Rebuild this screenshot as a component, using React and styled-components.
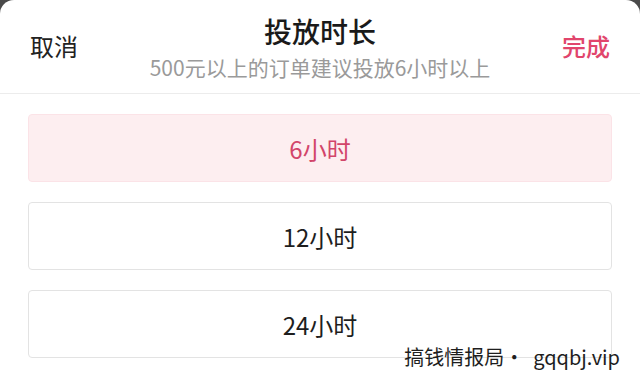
import React, { useState } from "react";
import styled, { createGlobalStyle } from "styled-components";

const GlobalStyle = createGlobalStyle`
    html, body {
        margin: 0;
        padding: 0;
        background: #4a4a4a;
    }
    body {
        font-family: "Noto Sans CJK SC", "Noto Sans", sans-serif;
    }
`;

const options = ["6小时", "12小时", "24小时"];

const App = () => {
    const [selected, setSelected] = useState(0);

    return (
        <>
            <GlobalStyle />
            <Sheet>
                <Header>
                    <Cancel>取消</Cancel>
                    <TitleBind>
                        <Title>投放时长</Title>
                        <Tip>500元以上的订单建议投放6小时以上</Tip>
                    </TitleBind>
                    <Done>完成</Done>
                </Header>
                <List>
                    {options.map((item, i) => (
                        <Option key={item} active={i === selected} onClick={() => setSelected(i)}>
                            {item}
                        </Option>
                    ))}
                </List>
                <Watermark>搞钱情报局·&nbsp; gqqbj.vip</Watermark>
            </Sheet>
        </>
    );
};

export default App;

const Sheet = styled.div`
    position: relative;
    width: 640px;
    height: 376px;
    background-color: #ffffff;
    border-radius: 14px 14px 0 0;
    overflow: hidden;
`;

const Header = styled.div`
    height: 94px;
    border-bottom: 1px solid #ececec;
    display: flex;
    flex-direction: row;
    align-items: center;
    justify-content: space-between;
    padding: 0 30px;
    box-sizing: border-box;
`;

const Cancel = styled.div`
    width: 70px;
    font-size: 24px;
    color: #222222;
    margin-top: -2px;
`;

const Done = styled.div`
    width: 70px;
    text-align: right;
    font-size: 24px;
    color: #e1456c;
    font-weight: 500;
    margin-top: -2px;
`;

const TitleBind = styled.div`
    display: flex;
    flex-direction: column;
    align-items: center;
`;

const Title = styled.div`
    font-size: 28px;
    font-weight: 500;
    color: #1a1a1a;
    line-height: 36px;
`;

const Tip = styled.div`
    font-size: 21px;
    color: #9a9a9a;
    line-height: 26px;
    margin-top: 5px;
`;

const List = styled.div`
    display: flex;
    flex-direction: column;
    gap: 20px;
    padding: 20px 28px 0;
`;

const Option = styled.div`
    height: 68px;
    box-sizing: border-box;
    border-radius: 4px;
    border: 1px solid ${(p) => (p.active ? "#fbe3e7" : "#e3e3e3")};
    background-color: ${(p) => (p.active ? "#fdeef0" : "#ffffff")};
    color: ${(p) => (p.active ? "#d2456a" : "#1e1e1e")};
    font-size: 24px;
    display: flex;
    justify-content: center;
    align-items: center;
    cursor: pointer;
`;

const Watermark = styled.div`
    position: absolute;
    right: 20px;
    bottom: 6px;
    font-size: 20px;
    color: #1e1e1e;
    line-height: 26px;
`;
